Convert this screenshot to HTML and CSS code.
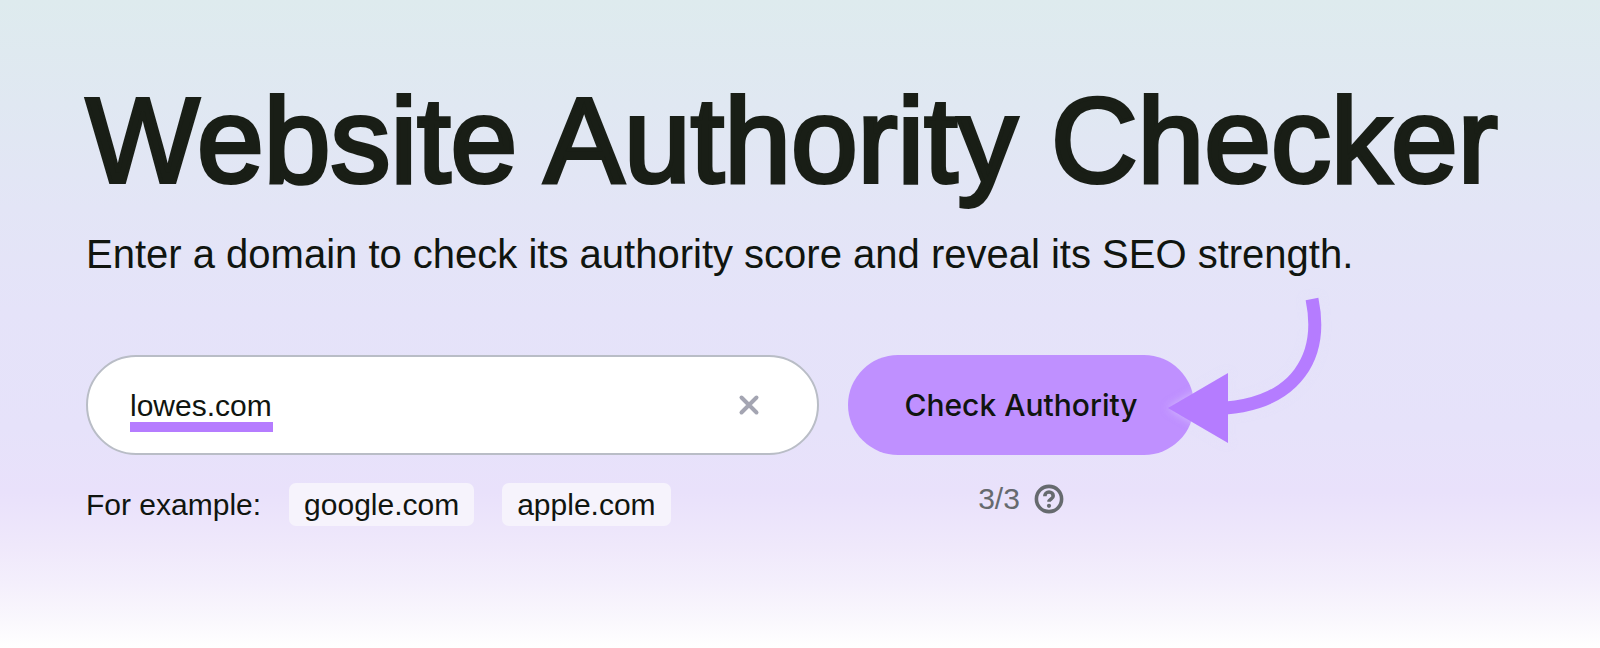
FILE: index.html
```html
<!DOCTYPE html>
<html lang="en">
<head>
<meta charset="utf-8">
<meta name="viewport" content="width=device-width, initial-scale=1">
<title>Website Authority Checker</title>
<link rel="stylesheet" href="styles.css">
</head>
<body>
<main class="hero">
  <h1 class="title">Website Authority Checker</h1>
  <p class="subtitle">Enter a domain to check its authority score and reveal its SEO strength.</p>
  <form class="checker">
    <div class="domain">
      <div class="field">
        <input class="field-input" type="text" aria-label="Domain" value="lowes.com">
        <span class="field-mark"></span>
        <button class="clear" type="button" aria-label="Clear">
          <svg class="clear-icon" viewBox="0 0 24 24"><path d="M4.5 4.5 19.5 19.5M19.5 4.5 4.5 19.5"/></svg>
        </button>
      </div>
      <div class="examples">
        <span>For example:</span>
        <button class="chip" type="button">google.com</button>
        <button class="chip" type="button">apple.com</button>
      </div>
    </div>
    <div class="action">
      <button class="submit" type="submit">Check Authority</button>
      <div class="quota">
        <span>3/3</span>
        <svg class="help-icon" viewBox="0 0 30 30" role="img" aria-label="Help">
          <circle cx="15" cy="15" r="12.6"/>
          <path d="M10.8 12.2c0-2.5 1.8-4.2 4.2-4.2s4.2 1.6 4.2 3.9c0 3.1-4.2 2.9-4.2 5.9"/>
          <circle class="help-dot" cx="15" cy="21.8" r="2.1"/>
        </svg>
      </div>
      <svg class="arrow" viewBox="0 0 160 150" aria-hidden="true">
        <path class="arrow-line" d="M144 4C156 62 128 107 58 113"/>
        <path class="arrow-head" d="M0 113 60 78V148Z"/>
      </svg>
    </div>
  </form>
</main>
</body>
</html>
```
FILE: styles.css
```css
* { box-sizing: border-box; }

body {
  margin: 0;
  min-height: 100vh;
  background: linear-gradient(180deg, #deebee 0%, #e0e8f2 16%, #e3e5f6 32%, #e5e3f9 48%, #e6e2fa 66%, #e9e1fb 76%, #efe8fb 84%, #f4effc 90%, #faf8fd 96%, #ffffff 100%);
  background-repeat: no-repeat;
  color: #191e16;
  font-family: "Liberation Sans", Arial, sans-serif;
}

button, input {
  font: inherit;
  color: #10150f;
}

button {
  border: 0;
  cursor: pointer;
}

.hero { padding: 68px 48px 48px 86px; }

.title {
  margin: 0;
  font-size: 120px;
  font-weight: 400;
  line-height: 144px;
  white-space: nowrap;
  -webkit-text-stroke: 4px currentColor;
}

.subtitle {
  margin: 16px 0 0;
  font-size: 40px;
  line-height: 52px;
  color: #10150f;
}

.checker {
  display: flex;
  align-items: flex-start;
  gap: 29px;
  max-width: 1108px;
  margin-top: 75px;
  font-size: 30px;
  line-height: 43px;
  color: #10150f;
}

.domain { flex: 1; }

.field {
  position: relative;
  display: flex;
  align-items: center;
  height: 100px;
  padding: 0 56px 0 42px;
  border: 2px solid #b9bdc6;
  border-radius: 50px;
  background: #fff;
}

.field-input {
  flex: 1;
  min-width: 0;
  padding: 0;
  border: 0;
  outline: 0;
  background: none;
}

.field-mark {
  position: absolute;
  left: 42px;
  bottom: 21px;
  width: 143px;
  height: 10px;
  background: #b57cff;
}

.clear {
  display: flex;
  padding: 0;
  background: none;
}

.clear-icon {
  width: 24px;
  height: 24px;
  fill: none;
  stroke: #a4a5b2;
  stroke-width: 4;
  stroke-linecap: round;
}

.examples {
  display: flex;
  align-items: center;
  gap: 28px;
  margin-top: 28px;
}

.chip {
  padding: 0 15px;
  border-radius: 7px;
  background: #f6f3fc;
}

.action {
  position: relative;
  flex: 0 0 346px;
}

.submit {
  width: 100%;
  height: 100px;
  border-radius: 50px;
  background: #bf90ff;
  font-family: Inter, "Liberation Sans", sans-serif;
  font-weight: 500;
}

.quota {
  display: flex;
  align-items: center;
  justify-content: center;
  gap: 14px;
  margin-top: 22px;
  color: #666a6e;
}

.help-icon {
  width: 30px;
  height: 30px;
  fill: none;
  stroke: currentColor;
  stroke-width: 3.6;
}

.help-dot {
  fill: currentColor;
  stroke: none;
}

.arrow {
  position: absolute;
  left: 320px;
  top: -60px;
  width: 160px;
  height: 150px;
  overflow: visible;
  filter: drop-shadow(0 0 4px #e5e1fb88);
}

.arrow-line {
  fill: none;
  stroke: #b57cff;
  stroke-width: 13;
}

.arrow-head { fill: #b57cff; }
```
